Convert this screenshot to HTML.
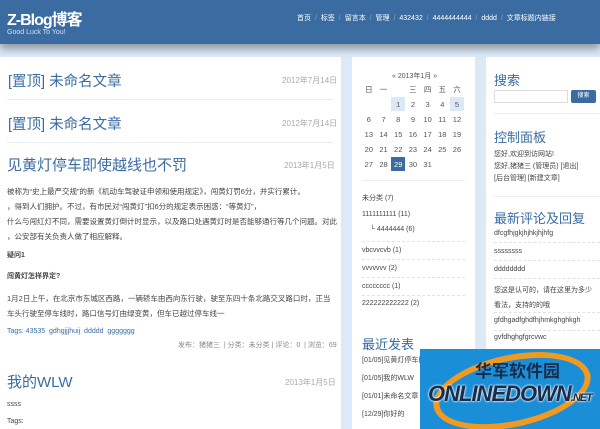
<!DOCTYPE html>
<html><head><meta charset="utf-8"><style>
*{margin:0;padding:0;box-sizing:border-box}
body{width:600px;height:429px;overflow:hidden;background:#dce9f7;font-family:"Liberation Sans","Noto Sans CJK SC",sans-serif;position:relative;color:#333}
.a{position:absolute;white-space:nowrap}
#hd{position:absolute;left:0;top:0;width:600px;height:44px;background:#3a6ca2;box-shadow:0 5px 8px rgba(0,0,0,.35)}
.p{position:absolute;background:#fff}
.t{color:#3a6ca2;font-size:14.5px}
.d{color:#aaa;font-size:8px}
.s{font-size:7px;color:#444}
.hr{position:absolute;height:1px;background:#e8edf2}
.dash{position:absolute;height:0;border-top:1px dashed #e3e3e3}
.h{color:#3a6ca2;font-size:13px}
.cal{border-collapse:collapse}
.cal td{width:14.7px;height:15px;text-align:center;font-size:7.5px;color:#555;border:1px solid #fff}
</style></head><body>
<div id="hd">
<div class="a" style="left:7px;top:6px;color:#fff;font-size:16px;font-weight:bold;letter-spacing:-1px">Z-Blog博客</div>
<div class="a" style="left:7px;top:29px;color:#dde;font-size:7px">Good Luck To You!</div>
<div class="a" style="left:297px;top:13px;color:#fff;font-size:7px;word-spacing:2px">首页 <span style="color:#8aa">/</span> 标签 <span style="color:#8aa">/</span> 留言本 <span style="color:#8aa">/</span> 管理 <span style="color:#8aa">/</span> 432432 <span style="color:#8aa">/</span> 4444444444 <span style="color:#8aa">/</span> dddd <span style="color:#8aa">/</span> 文章标题内链接</div>
</div>
<div class="p" style="left:0;top:57px;width:341px;height:372px"></div>
<div class="p" style="left:352px;top:57px;width:123px;height:372px"></div>
<div class="p" style="left:486px;top:57px;width:114px;height:372px"></div>

<div class="a t" style="left:8px;top:70px">[置顶] 未命名文章</div><div class="a d" style="left:282px;top:75px">2012年7月14日</div>
<div class="hr" style="left:7px;top:99px;width:326px"></div>
<div class="a t" style="left:8px;top:113px">[置顶] 未命名文章</div><div class="a d" style="left:282px;top:118px">2012年7月14日</div>
<div class="hr" style="left:7px;top:142px;width:326px"></div>
<div class="a" style="left:7px;top:154px;color:#3a6ca2;font-size:15px">见黄灯停车即使越线也不罚</div><div class="a d" style="left:284px;top:160px">2013年1月5日</div>
<div class="a s" style="left:7px;top:184px;line-height:15px;font-size:7.5px">被称为“史上最严交规”的新《机动车驾驶证申领和使用规定》，闯黄灯罚6分，并实行累计。<br>，得到人们拥护。不过，有市民对“闯黄灯”扣6分的规定表示困惑：“等黄灯”，<br>什么与闯红灯不同，需要设置黄灯倒计时显示，以及路口处遇黄灯时是否能够通行等几个问题。对此<br>，公安部有关负责人做了相应解释。</div>
<div class="a s" style="left:7px;top:250px;font-weight:bold">疑问1</div>
<div class="a s" style="left:7px;top:271px;font-weight:bold">闯黄灯怎样界定?</div>
<div class="a s" style="left:7px;top:291px;line-height:15px;font-size:7.5px">1月2日上午，在北京市东城区西路，一辆轿车由西向东行驶，驶至东四十条北路交叉路口时，正当<br>车头行驶至停车线时，路口信号灯由绿变黄，但车已越过停车线一</div>
<div class="a" style="left:7px;top:328px;font-size:7px;color:#3a6ca2">Tags: 43535 &nbsp;gdhgjjjhuij &nbsp;ddddd &nbsp;ggggggg</div>
<div class="a" style="left:178px;top:340px;font-size:7px;color:#888">发布：猪猪三 &nbsp;| 分类：未分类 | 评论：0 &nbsp;| 浏览：69</div>
<div class="a" style="left:7px;top:371px;color:#3a6ca2;font-size:15px">我的WLW</div><div class="a d" style="left:285px;top:377px">2013年1月5日</div>
<div class="a s" style="left:7px;top:401px">ssss</div>
<div class="a s" style="left:7px;top:418px">Tags:</div>

<div class="a" style="left:392px;top:71px;font-size:7px;color:#555">« 2013年1月 »</div>
<table class="cal a" style="left:361px;top:81px">
<tr><td>日</td><td>一</td><td></td><td>三</td><td>四</td><td>五</td><td>六</td></tr>
<tr><td></td><td></td><td style="background:#dbe8f6">1</td><td>2</td><td>3</td><td>4</td><td style="background:#dbe8f6">5</td></tr>
<tr><td>6</td><td>7</td><td>8</td><td>9</td><td>10</td><td>11</td><td>12</td></tr>
<tr><td>13</td><td>14</td><td>15</td><td>16</td><td>17</td><td>18</td><td>19</td></tr>
<tr><td>20</td><td>21</td><td>22</td><td>23</td><td>24</td><td>25</td><td>26</td></tr>
<tr><td>27</td><td>28</td><td style="background:#3a6ca2;color:#fff">29</td><td>30</td><td>31</td><td></td><td></td></tr>
</table>
<div class="hr" style="left:362px;top:180px;width:103px"></div>
<div class="a s" style="left:362px;top:193px">未分类 (7)</div>
<div class="a s" style="left:362px;top:211px">1111111111 (11)</div>
<div class="a s" style="left:370px;top:226px">└ 4444444 (6)</div>
<div class="dash" style="left:362px;top:241px;width:103px"></div>
<div class="a s" style="left:362px;top:247px">vbcvvcvb (1)</div>
<div class="dash" style="left:362px;top:259px;width:103px"></div>
<div class="a s" style="left:362px;top:265px">vvvvvvv (2)</div>
<div class="dash" style="left:362px;top:277px;width:103px"></div>
<div class="a s" style="left:362px;top:283px">cccccccc (1)</div>
<div class="dash" style="left:362px;top:295px;width:103px"></div>
<div class="a s" style="left:362px;top:300px">222222222222 (2)</div>
<div class="a h" style="left:362px;top:334px">最近发表</div>
<div class="a s" style="left:362px;top:355px">[01/05]见黄灯停车即使</div>
<div class="a s" style="left:362px;top:373px">[01/05]我的WLW</div>
<div class="a s" style="left:362px;top:391px">[01/01]未命名文章</div>
<div class="a s" style="left:362px;top:409px">[12/29]你好的</div>

<div class="a h" style="left:494px;top:70px">搜索</div>
<div class="a" style="left:494px;top:90px;width:74px;height:13px;border:1px solid #ddd"></div>
<div class="a" style="left:571px;top:90px;width:25px;height:13px;background:#3a6ca2;border-radius:2px;color:#fff;font-size:6px;text-align:center;line-height:13px">搜索</div>
<div class="hr" style="left:494px;top:113px;width:106px"></div>
<div class="a h" style="left:494px;top:127px">控制面板</div>
<div class="a s" style="left:494px;top:149px;line-height:12px">您好,欢迎到访网站!<br>您好,猪猪三 (管理员) [退出]<br>[后台管理] [新建文章]</div>
<div class="hr" style="left:494px;top:196px;width:106px"></div>
<div class="a h" style="left:494px;top:208px">最新评论及回复</div>
<div class="a s" style="left:494px;top:230px">dfcgfhjgkjhjhkjhjhfg</div>
<div class="dash" style="left:494px;top:242px;width:106px"></div>
<div class="a s" style="left:494px;top:248px">ssssssss</div>
<div class="dash" style="left:494px;top:260px;width:106px"></div>
<div class="a s" style="left:494px;top:266px">dddddddd</div>
<div class="dash" style="left:494px;top:278px;width:106px"></div>
<div class="a s" style="left:494px;top:283px;line-height:15px">您这是认可的，请在这里为多少<br>看法，支持的的哦</div>
<div class="dash" style="left:494px;top:312px;width:106px"></div>
<div class="a s" style="left:494px;top:317px">gfdhgadfghdfhjhmkghghkgh</div>
<div class="dash" style="left:494px;top:330px;width:106px"></div>
<div class="a s" style="left:494px;top:334px">gvfdhghgfgrcvwc</div>

<div class="a" style="left:420px;top:349px;width:180px;height:80px;background:#1a8fd8;overflow:hidden">
<div class="a" style="left:12px;top:6px;width:160px;height:72px;border:6px solid #f39a1e;border-radius:50%;transform:rotate(-12deg)"></div>
<div class="a" style="left:55px;top:8px;color:#1b2b4a;font-size:17px;font-weight:bold">华军软件园</div>
<div class="a" style="left:8px;top:32px;color:#1b2b4a;font-size:22px;font-weight:bold;font-style:italic;letter-spacing:-1px;text-shadow:0 0 2px #fff,0 0 2px #fff">ONLINEDOWN<span style="font-size:11px">.NET</span></div>
</div>
</body></html>
